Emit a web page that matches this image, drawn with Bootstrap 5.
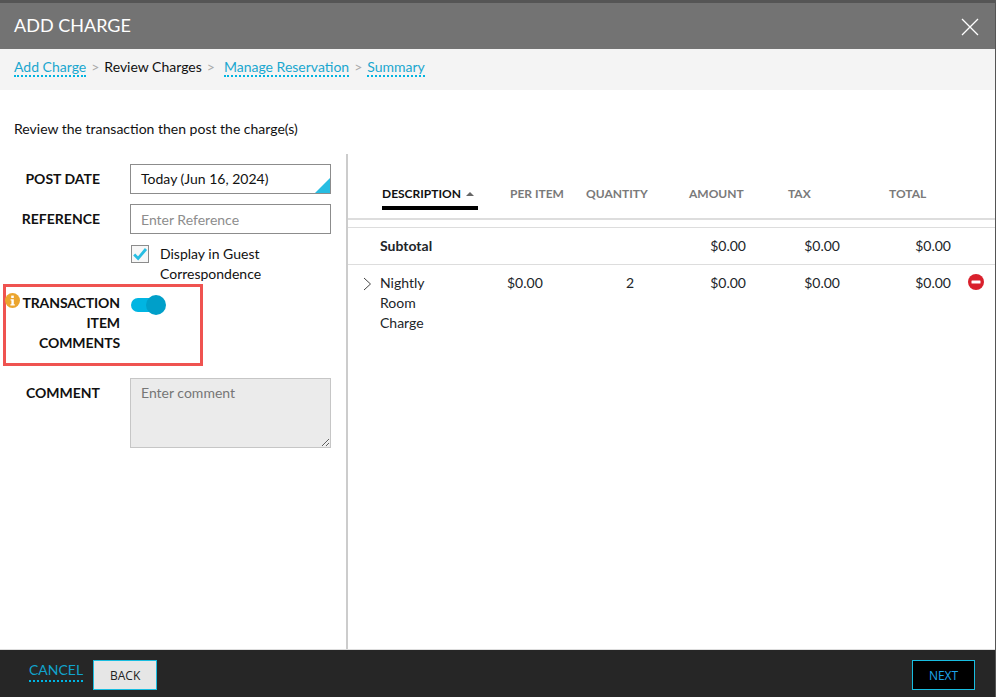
<!DOCTYPE html>
<html lang="en">
<head>
<meta charset="utf-8">
<title>Add Charge</title>
<link href="https://cdn.jsdelivr.net/npm/bootstrap@5.3.0/dist/css/bootstrap.min.css" rel="stylesheet">
<style>
html,body{height:100%;overflow:hidden}
body{font-family:Lato,"Liberation Sans",sans-serif;font-size:14px;line-height:20px;color:#111;background:#fff}
.shell{height:697px;border-right:1px solid #555}
.titlebar{height:49px;background:#737373;border-top:3px solid #555;color:#fff;padding:0 14px}
.titlebar h1{font-size:18px;font-weight:400;line-height:44px;margin:0 0 2px}
.closer{width:18px;height:18px;display:block;margin:1px 2px 0 0}
.crumbs{height:41px;background:#f4f4f4;padding:0 14px 6px}
.crumbs .breadcrumb{--bs-breadcrumb-divider:'>';--bs-breadcrumb-item-padding-x:5px;--bs-breadcrumb-divider-color:#aaa;--bs-breadcrumb-item-active-color:#111;margin:0;font-size:14px;line-height:18px}
.crumbs a,.cancel-link{color:#1aa7cf;text-decoration:none;border-bottom:2px dotted #00b5e2}
.wide-gap{margin-left:4px}
.intro{margin:29px 14px 15px;line-height:20px}
.main{min-height:0}
.leftcol{width:346px;flex:none;padding-top:10px}
.rightcol{border-left:2px solid #ccc;min-width:0}
.field-label{width:100px;flex:none;text-align:right;font-weight:700;line-height:30px;margin:0}
.field-ctrl{width:201px;margin-left:30px}
.ref-row{margin-top:10px}
.text-field{height:30px;border:1px solid #8c8c8c;border-radius:0;padding:0 10px;font-size:14px;background:#fff;color:#111}
.text-field::placeholder{color:#8d8d8d;opacity:1}
.note-field::placeholder{color:#767676;opacity:1}
.date-field{position:relative;line-height:28px}
.date-field::after{content:"";position:absolute;right:0;bottom:0;border-style:solid;border-width:0 0 15px 15px;border-color:transparent transparent #27bde2 transparent}
.guest-check{margin:10px 0 0 131px;height:40px;gap:11px;width:180px}
.tick-box{width:18px;height:18px;border:1px solid #8c8c8c;flex:none;margin-top:1px;background:#f7f7f7}
.tick-box svg{display:block}
.alert-frame{width:200px;height:82px;margin-left:3px;border:3px solid #ef5350}
.alert-label{width:114px;flex:none;text-align:right;font-weight:700;padding-top:6px;position:relative;margin:0;letter-spacing:-.1px}
.info-dot{position:absolute;left:-1px;top:6px;display:block}
.switcher{width:35px;height:20px;margin:8px 0 0 11px;position:relative}
.switcher::before{content:"";position:absolute;left:0;top:3px;width:30px;height:14px;border-radius:7px;background:#00b5e2}
.switcher::after{content:"";position:absolute;right:0;top:0;width:20px;height:20px;border-radius:50%;background:#009fc9}
.comment-row{margin-top:12px}
.comment-row .field-label{line-height:30px}
.note-field{width:201px;height:70px;margin-left:30px;border:1px solid #c6c6c6;border-radius:0;background:#ebebeb;padding:4px 10px;font-size:14px;line-height:20px;resize:both;display:block}
.charge-table{width:647px;table-layout:fixed;border-collapse:collapse;margin:0;--bs-table-bg:transparent}
.charge-table>*>tr>*{padding:0;border:0;font-size:14px;line-height:20px;vertical-align:top}
.charge-table thead th{height:65px;color:#7a7a7a;font-size:12px;font-weight:700;padding-top:30px;border-bottom:2px solid #ddd;text-align:left;white-space:nowrap}
.charge-table thead th.sorted{color:#111;padding-left:2px}
.sort-mark{display:block;width:96px;height:26px;border-bottom:4px solid #000;line-height:20px}
.sort-mark i{display:inline-block;border-style:solid;border-width:0 4px 4px 4px;border-color:transparent transparent #666 transparent;margin-left:5px;vertical-align:2px}
.h-per{padding-left:3px!important}
.h-amt{padding-left:24px!important}
.h-tax{padding-left:42px!important}
.h-tot{padding-left:49px!important}
.gap-row td{height:8px;border-bottom:1px solid #ddd!important}
.sub-row td{height:37px;padding-top:8px!important;border-bottom:1px solid #ddd!important}
.item-row td{padding-top:8px!important}
.num{text-align:right}
.qty-cell{padding-left:40px!important}
.expander,.remover{display:block}
.expander{margin:4px 0 0 15px}
.remover{margin:1px 0 0 17px}
.bottombar{height:48px;background:#262626;border-top:1px solid #ddd;padding:3px 20px 0 29px}
.cancel-link{font-size:14px;line-height:20px;color:#11a3cc;margin:0 10px 8px 0}
.act-btn{width:64px;height:30px;border-radius:0;border:1px solid #18bde0;font-family:"Open Sans",sans-serif;font-size:12px;padding:1px 0 0;line-height:27px}
.act-back{background:#e6e6e6;color:#222}
.act-next{background:#000;color:#1ea7ea;width:63px}
</style>
</head>
<body>
<div class="shell d-flex flex-column">
  <header class="titlebar d-flex align-items-center justify-content-between flex-none">
    <h1>ADD CHARGE</h1>
    <svg class="closer" viewBox="0 0 18 18" aria-hidden="true"><path d="M1 1l16 16M17 1L1 17" stroke="#fff" stroke-width="1.3" fill="none"/></svg>
  </header>
  <nav class="crumbs d-flex align-items-center" aria-label="breadcrumb">
    <ol class="breadcrumb">
      <li class="breadcrumb-item"><a href="#">Add Charge</a></li>
      <li class="breadcrumb-item active">Review Charges</li>
      <li class="breadcrumb-item"><a href="#" class="wide-gap">Manage Reservation</a></li>
      <li class="breadcrumb-item"><a href="#">Summary</a></li>
    </ol>
  </nav>
  <p class="intro">Review the transaction then post the charge(s)</p>
  <div class="main d-flex flex-grow-1">
    <div class="leftcol">
      <div class="d-flex">
        <label class="field-label">POST DATE</label>
        <div class="field-ctrl text-field date-field">Today (Jun 16, 2024)</div>
      </div>
      <div class="d-flex ref-row">
        <label class="field-label">REFERENCE</label>
        <input class="field-ctrl text-field form-control" placeholder="Enter Reference">
      </div>
      <div class="guest-check d-flex">
        <span class="tick-box"><svg width="16" height="16" viewBox="0 0 16 16" aria-hidden="true"><path d="M2.2 8.5l3.9 4L14 3" stroke="#27bde2" stroke-width="2.8" fill="none"/></svg></span>
        <span>Display in Guest Correspondence</span>
      </div>
      <div class="alert-frame d-flex">
        <p class="alert-label">
          <svg class="info-dot" width="15" height="15" viewBox="0 0 15 15" aria-hidden="true"><circle cx="7.5" cy="7.5" r="7.5" fill="#eba52e"/><rect x="6.2" y="2.6" width="2.6" height="2.4" fill="#fff"/><path d="M5.6 6.2h3.2v5h1v1.3H5.4v-1.3h1v-3.7h-.8z" fill="#fff"/></svg>
          TRANSACTION ITEM COMMENTS
        </p>
        <span class="switcher"></span>
      </div>
      <div class="comment-row d-flex">
        <label class="field-label">COMMENT</label>
        <textarea class="note-field" placeholder="Enter comment"></textarea>
      </div>
    </div>
    <div class="rightcol flex-grow-1">
      <table class="table charge-table">
        <colgroup><col width="32"><col width="127"><col width="79"><col width="79"><col width="81"><col width="94"><col width="111"><col width="44"></colgroup>
        <thead>
          <tr>
            <th></th>
            <th class="sorted"><span class="sort-mark">DESCRIPTION<i></i></span></th>
            <th class="h-per">PER ITEM</th>
            <th>QUANTITY</th>
            <th class="h-amt">AMOUNT</th>
            <th class="h-tax">TAX</th>
            <th class="h-tot">TOTAL</th>
            <th></th>
          </tr>
        </thead>
        <tbody>
          <tr class="gap-row"><td colspan="8"></td></tr>
          <tr class="sub-row">
            <td></td><td class="fw-bold">Subtotal</td><td></td><td></td>
            <td class="num">$0.00</td><td class="num">$0.00</td><td class="num">$0.00</td><td></td>
          </tr>
          <tr class="item-row">
            <td><svg class="expander" width="9" height="14" viewBox="0 0 9 14" aria-hidden="true"><path d="M1 1l6.5 6L1 13" stroke="#444" stroke-width="1" fill="none"/></svg></td>
            <td><div class="w-50">Nightly Room Charge</div></td>
            <td>$0.00</td>
            <td class="qty-cell">2</td>
            <td class="num">$0.00</td><td class="num">$0.00</td><td class="num">$0.00</td>
            <td><svg class="remover" width="16" height="16" viewBox="0 0 16 16" aria-hidden="true"><circle cx="8" cy="8" r="8" fill="#d9202c"/><rect x="3.5" y="6.5" width="9" height="3" rx=".5" fill="#fff"/></svg></td>
          </tr>
        </tbody>
      </table>
    </div>
  </div>
  <footer class="bottombar d-flex align-items-center">
    <a href="#" class="cancel-link">CANCEL</a>
    <button class="btn act-btn act-back" type="button">BACK</button>
    <button class="btn act-btn act-next ms-auto" type="button">NEXT</button>
  </footer>
</div>
<script src="https://cdn.jsdelivr.net/npm/bootstrap@5.3.0/dist/js/bootstrap.bundle.min.js"></script>
</body>
</html>
